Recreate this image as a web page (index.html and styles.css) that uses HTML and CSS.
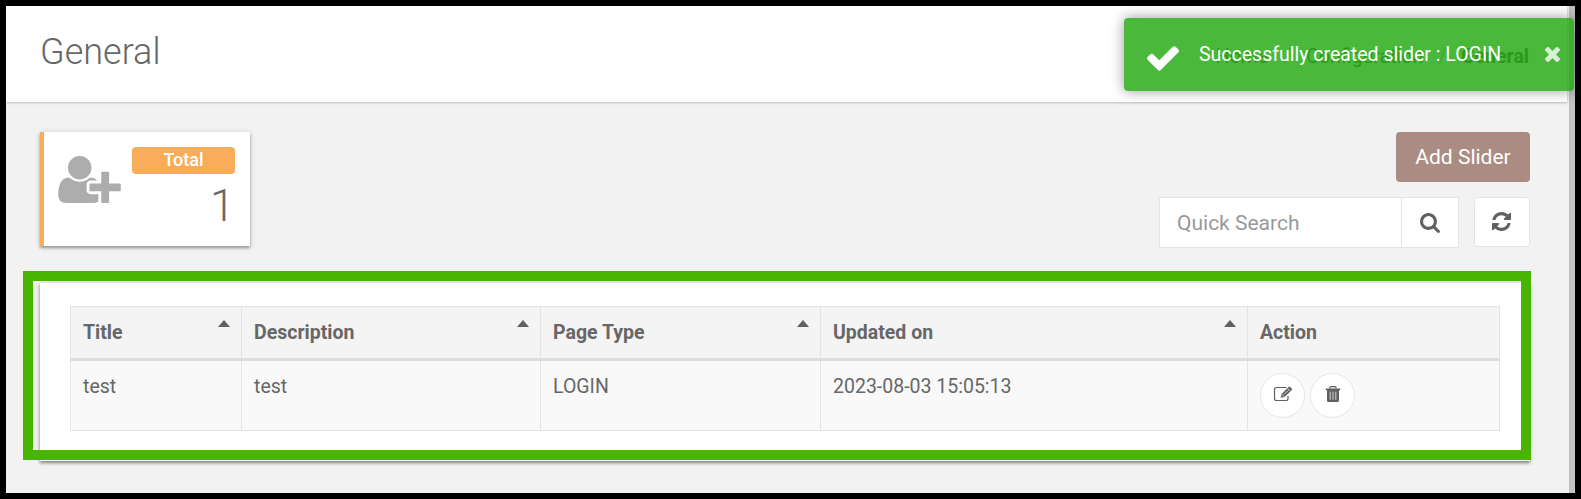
FILE: index.html
```html
<!DOCTYPE html>
<html lang="en">
<head>
<meta charset="utf-8">
<title>General</title>
<link rel="stylesheet" href="styles.css">
</head>
<body>
<div class="app">
  <header class="header">
    <h1 class="title">General</h1>
    <nav class="crumbs"><span>Home</span><i>/</i><span>Configuration</span><i>/</i><b>General</b></nav>
  </header>
  <main class="content">
    <section class="top">
      <div class="stat">
        <svg class="stat-icon" viewBox="0 128 2048 1536"><path d="M704 896q-159 0-271.5-112.5t-112.5-271.5 112.5-271.5 271.5-112.5 271.5 112.5 112.5 271.5-112.5 271.5-271.5 112.5zm960 128h352q13 0 22.5 9.5t9.5 22.5v192q0 13-9.5 22.5t-22.5 9.5h-352v352q0 13-9.5 22.5t-22.5 9.5h-192q-13 0-22.5-9.5t-9.5-22.5v-352h-352q-13 0-22.5-9.5t-9.5-22.5v-192q0-13 9.5-22.5t22.5-9.5h352v-352q0-13 9.5-22.5t22.5-9.5h192q13 0 22.5 9.5t9.5 22.5v352zm-736 224q0 52 38 90t90 38h256v238q-68 50-171 50h-874q-121 0-194-69t-73-190q0-53 3.5-103.5t14-109 26.5-108.5 43-97.5 62-81 85.5-53.5 111.5-20q19 0 39 17 79 61 154.5 91.5t164.5 30.5 164.5-30.5 154.5-91.5q20-17 39-17 132 0 217 96h-223q-52 0-90 38t-38 90v192z"/></svg>
        <div class="stat-body"><span class="stat-label">Total</span><span class="stat-value">1</span></div>
      </div>
      <div class="tools">
        <button class="add">Add Slider</button>
        <div class="tool-row">
          <div class="search">
            <div class="search-input">Quick Search</div>
            <div class="search-btn"><svg width="20" height="20" viewBox="64 128 1664 1664"><path d="M1216 832q0-185-131.5-316.5t-316.5-131.5-316.5 131.5-131.5 316.5 131.5 316.5 316.5 131.5 316.5-131.5 131.5-316.5zm512 832q0 52-38 90t-90 38q-54 0-90-38l-343-342q-179 124-399 124-143 0-273.5-55.5t-225-150-150-225-55.5-273.5 55.5-273.5 150-225 225-150 273.5-55.5 273.5 55.5 225 150 150 225 55.5 273.5q0 220-124 399l343 343q37 37 37 90z"/></svg></div>
          </div>
          <div class="refresh"><svg width="19" height="19" viewBox="128 128 1536 1536"><path d="M1639 1056q0 5-1 7-64 268-268 434.5t-478 166.5q-146 0-282.5-55t-243.5-157l-129 129q-19 19-45 19t-45-19-19-45v-448q0-26 19-45t45-19h448q26 0 45 19t19 45-19 45l-137 137q71 66 161 102t187 36q134 0 250-65t186-179q11-17 53-117 8-23 30-23h192q13 0 22.5 9.5t9.5 22.5zm25-800v448q0 26-19 45t-45 19h-448q-26 0-45-19t-19-45 19-45l138-138q-148-137-349-137-134 0-250 65t-186 179q-11 17-53 117-8 23-30 23h-199q-13 0-22.5-9.5t-9.5-22.5v-7q65-268 270-434.5t480-166.5q146 0 284 55.5t245 156.5l130-129q19-19 45-19t45 19 19 45z"/></svg></div>
        </div>
      </div>
    </section>
    <section class="panel">
      <table class="grid">
        <colgroup><col class="c1"><col class="c2"><col class="c3"><col class="c4"><col class="c5"></colgroup>
        <thead><tr>
          <th><div class="th">Title<span class="sort"></span></div></th>
          <th><div class="th">Description<span class="sort"></span></div></th>
          <th><div class="th">Page Type<span class="sort"></span></div></th>
          <th><div class="th">Updated on<span class="sort"></span></div></th>
          <th><div class="th">Action</div></th>
        </tr></thead>
        <tbody><tr>
          <td>test</td><td>test</td><td>LOGIN</td><td>2023-08-03 15:05:13</td>
          <td><div class="actions">
            <span class="round"><svg width="20" height="18" viewBox="0 0 20 18"><path class="line" d="M13.4 2.5H3.6Q1.5 2.5 1.5 4.6v8.8q0 2.1 2.1 2.1h9.3q2.1 0 2.1-2.1V11"/><path d="M7.6 12.8l.9-3.9 7-6.9q.8-.8 1.6 0l1.6 1.6q.8.8 0 1.6l-7.1 6.9z"/><path class="cut" d="M9 9.4l2.2 2.2M11.2 9.4l4-4M14.6 3.4l2.8 2.8"/></svg></span>
            <span class="round"><svg width="16" height="18" viewBox="0 0 16 18"><path class="lid" d="M5 3.6V2.6Q5 1.6 6.1 1.6h3.8q1.1 0 1.1 1v1"/><path d="M.8 3.5h14.4v1.8H.8zM2 5h12v10.4q0 1.6-1.6 1.6H3.6Q2 17 2 15.400z"/><path class="cut" d="M5.200 6.600v8.200M8 6.600v8.200M10.800 6.600v8.200"/></svg></span>
          </div></td>
        </tr></tbody>
      </table>
    </section>
  </main>
</div>
<div class="scrollbar"></div>
<div class="highlight"></div>
<div class="toast">
  <svg class="toast-check" viewBox="121 338 1550 1188"><path d="M1671 566q0 40-28 68l-724 724-136 136q-28 28-68 28t-68-28l-136-136-362-362q-28-28-28-68t28-68l136-136q28-28 68-28t68 28l294 295 656-657q28-28 68-28t68 28l136 136q28 28 28 68z"/></svg>
  <span class="toast-text">Successfully created slider : LOGIN</span>
  <svg class="toast-close" viewBox="302 366 1188 1188"><path d="M1490 1322q0 40-28 68l-136 136q-28 28-68 28t-68-28l-294-294-294 294q-28 28-68 28t-68-28l-136-136q-28-28-28-68t28-68l294-294-294-294q-28-28-28-68t28-68l136-136q28-28 68-28t68 28l294 294 294-294q28-28 68-28t68 28l136 136q28 28 28 68t-28 68l-294 294 294 294q28 28 28 68z"/></svg>
</div>
</body>
</html>
```
FILE: styles.css
```css
* { box-sizing: border-box; }
body {
  margin: 0;
  height: 499px;
  padding: 6px;
  background: #000;
  display: flex;
  overflow: hidden;
  font-family: Roboto, sans-serif;
  font-size: 19.5px;
  color: #676767;
}
svg { display: block; fill: #606060; }
.app { width: 1563px; height: 487px; background: #f2f2f2; overflow: hidden; }
.scrollbar { width: 6px; height: 487px; background: #c1c1c1; }
.header {
  width: 1561px;
  height: 96px;
  padding: 0 38px 0 34px;
  background: #fff;
  box-shadow: 0 1px 2px rgba(0,0,0,.24);
  display: flex;
  justify-content: space-between;
}
.title { margin: 24px 0 0; font-weight: 300; font-size: 36px; line-height: 44px; color: #676767; }
.crumbs { display: flex; margin-top: 39px; line-height: 24px; font-size: 19.5px; }
.crumbs i { font-style: normal; margin: 0 15px; color: #bbb; }
.crumbs b { font-weight: 700; }
.content { padding: 30px 39px 0 34px; }
.top { display: flex; justify-content: space-between; }
.stat {
  width: 210px;
  height: 114px;
  padding: 15px 15px 0 18px;
  border-left: 4px solid #f9ad5a;
  background: #fff;
  box-shadow: 0 2px 3px rgba(0,0,0,.36), 0 0 6px rgba(60,60,100,.12);
  display: flex;
  justify-content: space-between;
}
.stat-icon { width: 63px; height: 47px; margin: 9px 0 0 -4px; fill: #adadad; }
.stat-body { width: 103px; display: flex; flex-direction: column; }
.stat-label { height: 27px; border-radius: 4px; background: #f9ad5a; color: #fff; font-weight: 500; font-size: 18px; line-height: 26px; text-align: center; }
.stat-value { font-weight: 300; font-size: 45px; line-height: 52px; margin-top: 6px; text-align: right; }
.tools { display: flex; flex-direction: column; align-items: flex-end; gap: 15px; }
.add { width: 134px; height: 50px; padding: 0; border: 0; border-radius: 4px; background: #ab8c83; color: #fff; font: 400 21px Roboto, sans-serif; }
.tool-row { display: flex; gap: 15px; }
.search { display: flex; width: 300px; height: 51px; border: 1px solid #e4e4e4; background: #fff; }
.search-input { width: 242px; padding-left: 17px; border-right: 1px solid #e4e4e4; font-size: 21px; line-height: 50px; color: #999; }
.search-btn { flex: 1; display: flex; align-items: center; justify-content: center; padding-top: 1px; }
.refresh { width: 56px; height: 50px; border: 1px solid #e4e4e4; border-radius: 4px; background: #fff; display: flex; align-items: center; justify-content: center; padding: 0 2px 2px 0; }
.panel { height: 178px; margin-top: 35px; padding: 23px 30px 0; background: #fff; box-shadow: 0 2px 3px rgba(0,0,0,.42), 0 0 6px rgba(60,60,100,.14); }
.grid { width: 1429px; border-collapse: collapse; table-layout: fixed; }
.c1 { width: 171px; } .c2 { width: 299px; } .c3 { width: 280px; } .c4 { width: 427px; } .c5 { width: 252px; }
th, td { border: 1px solid #e4e4e4; padding: 0 12px; text-align: left; vertical-align: top; }
th { height: 53px; background: #f4f4f4; border-bottom: 3px solid #ddd; font-weight: 700; }
.th { display: flex; justify-content: space-between; line-height: 51px; }
.sort { width: 0; height: 0; margin: 13px -1px 0 0; border: 6px solid transparent; border-top: 0; border-bottom: 7px solid #606060; }
td { height: 71px; background: #f9f9f9; padding-top: 12px; line-height: 27px; }
.actions { display: flex; gap: 5px; }
.round { width: 45px; height: 45px; border: 1px solid #e7e7e7; border-radius: 50%; background: #fff; display: flex; align-items: center; justify-content: center; padding-bottom: 3px; }
.line, .lid { fill: none; stroke: #606060; stroke-width: 1.2; }
.cut { fill: none; stroke: #e4e4e4; stroke-width: .9; }
.highlight { position: absolute; left: 23px; top: 271px; width: 1508px; height: 189px; border: 10px solid #48b500; }
.toast {
  position: absolute;
  left: 1124px;
  top: 18px;
  width: 450px;
  height: 73px;
  padding: 0 14px 0 23px;
  border-radius: 4px;
  background: rgba(29,166,9,.8);
  box-shadow: 0 0 14px rgba(0,0,0,.4);
  color: #fff;
  display: flex;
  align-items: center;
}
.toast-check { width: 32px; height: 25px; margin-top: 8px; fill: #fff; }
.toast-text { flex: 1; padding-left: 20px; line-height: 24px; white-space: nowrap; }
.toast-close { width: 15px; height: 15px; margin-bottom: 1px; fill: #d9f2d5; }
```
